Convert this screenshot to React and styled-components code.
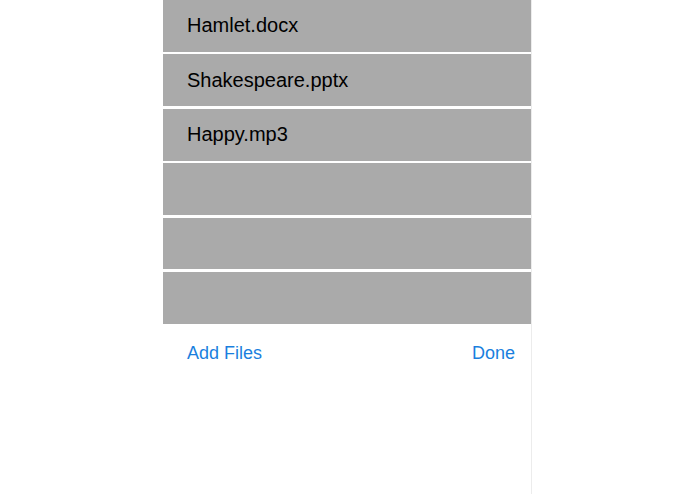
import React from 'react'
import styled, { createGlobalStyle } from 'styled-components'

const files = ['Hamlet.docx', 'Shakespeare.pptx', 'Happy.mp3', '', '', '']

const GlobalStyle = createGlobalStyle`
  html, body {
    margin: 0;
    padding: 0;
    background: #ffffff;
  }
  body {
    font-family: "Liberation Sans", Arial, sans-serif;
  }
`

const Page = styled.div`
  display: flex;
  height: 494px;
  padding-left: 163px;
`

const Panel = styled.div`
  display: flex;
  flex-direction: column;
  width: 368px;
  border-right: 1px solid #ececec;
`

const FileList = styled.ul`
  display: flex;
  flex-direction: column;
  gap: 2.6px;
  margin: 0;
  padding: 0;
  list-style: none;
`

const FileRow = styled.li`
  display: flex;
  align-items: center;
  height: 51.8px;
  padding-left: 24px;
  background: #aaaaaa;
  color: #000000;
  font-size: 20px;
`

const Footer = styled.div`
  display: flex;
  align-items: center;
  justify-content: space-between;
  height: 56px;
  padding: 2px 16px 0 24px;
`

const LinkButton = styled.button`
  border: 0;
  background: none;
  padding: 0;
  font-family: inherit;
  font-size: 18px;
  color: #1a7fde;
  cursor: pointer;
`

export default function App() {
  return (
    <>
      <GlobalStyle />
      <Page>
        <Panel>
          <FileList>
            {files.map((name, i) => (
              <FileRow key={i}>{name}</FileRow>
            ))}
          </FileList>
          <Footer>
            <LinkButton>Add Files</LinkButton>
            <LinkButton>Done</LinkButton>
          </Footer>
        </Panel>
      </Page>
    </>
  )
}
